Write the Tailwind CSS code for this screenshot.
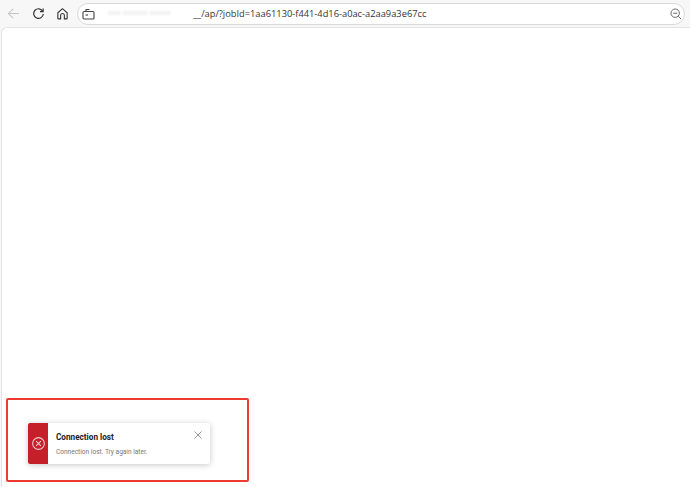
<!DOCTYPE html>
<html lang="en">
<head>
    <meta charset="UTF-8">
    <title>Connection lost</title>
    <script src="https://cdn.jsdelivr.net/npm/@tailwindcss/browser@4"></script>
</head>
<body class="w-[690px] h-[487px] overflow-hidden bg-[#f7f7f7] font-['Open_Sans',sans-serif]">
    <!-- Browser toolbar -->
    <header class="h-[27px] flex items-center pl-[7px] pr-[5px]">
        <svg class="w-[13px] h-[13px] text-[#c4c4c4]" viewBox="0 0 14 14" fill="none" stroke="currentColor" stroke-width="1.1"><path d="M13 7H1.5M6.5 2 1.5 7l5 5"/></svg>
        <svg class="w-[13px] h-[13px] ml-[12px] text-[#333]" viewBox="0 0 14 14" fill="none" stroke="currentColor" stroke-width="1.3"><path d="M11.6 4.6A5.2 5.2 0 1 0 12.2 7.6"/><path d="M12 1.6v3.4H8.6"/></svg>
        <svg class="w-[13px] h-[13px] ml-[11px] text-[#333]" viewBox="0 0 14 14" fill="none" stroke="currentColor" stroke-width="1.2"><path d="M2 6.2 7 1.8l5 4.4V12a.8.8 0 0 1-.8.8H9V9a2 2 0 0 0-4 0v3.8H2.8A.8.8 0 0 1 2 12z"/></svg>
        <!-- Address bar -->
        <div class="ml-[8px] flex-1 h-[22px] bg-white border border-[#d9d9d9] rounded-full flex items-center pl-[4px] pr-[2px]">
            <svg class="w-[13px] h-[12px] text-[#444]" viewBox="0 0 13 12" fill="none" stroke="currentColor" stroke-width="1.1"><rect x="1" y="3.5" width="11" height="7.5" rx="1"/><path d="M4 3.5V1.5h3.5"/><path d="M3.5 7h2.5"/></svg>
            <span class="ml-[13px] w-[68px] text-[7px] text-[#dcdcdc] blur-[0.8px] whitespace-nowrap overflow-hidden">ooo oooooo ooooo</span>
            <span class="ml-[17px] text-[9.3px] leading-none text-[#333]">__/ap/?jobId=1aa61130-f441-4d16-a0ac-a2aa9a3e67cc</span>
            <svg class="ml-auto w-[12px] h-[12px] text-[#666]" viewBox="0 0 12 12" fill="none" stroke="currentColor" stroke-width="1"><circle cx="5.2" cy="5.2" r="4.2"/><path d="M3.2 5.2h4M8.3 8.3 11 11"/></svg>
        </div>
    </header>

    <!-- Page -->
    <main class="h-[460px] ml-[1px] bg-white rounded-tl-md border-l border-t border-[#e4e4e4] flex flex-col justify-end pl-[4px] pb-[5px]">
        <div class="w-[243px] h-[84px] border-2 border-[#ef3a32] rounded-[2px] flex items-center pl-[20px] pt-[6px]">
            <!-- Toast -->
            <div class="w-[182px] h-[41px] flex bg-white rounded-[2px] shadow-[0_1px_6px_rgba(0,0,0,0.22)] overflow-hidden font-['Roboto',sans-serif]">
                <div class="w-[20px] bg-[#c5202a] flex items-center justify-center">
                    <svg class="w-[13px] h-[13px] text-[#f3c9cc]" viewBox="0 0 12 12" fill="none" stroke="currentColor" stroke-width="1"><circle cx="6" cy="6" r="5.4"/><path d="M3.8 3.8l4.4 4.4M8.2 3.8l-4.4 4.4"/></svg>
                </div>
                <div class="flex-1 pl-[8px] pt-[9px]">
                    <p class="text-[8.2px] leading-[11px] font-bold text-[#222]">Connection lost</p>
                    <p class="mt-[5px] text-[6.55px] leading-[9px] text-[#777]">Connection lost. Try again later.</p>
                </div>
                <svg class="mt-[8px] mr-[8px] w-[8px] h-[8px] text-[#999]" viewBox="0 0 8 8" fill="none" stroke="currentColor" stroke-width="1"><path d="M.5.5l7 7M7.5.5l-7 7"/></svg>
            </div>
        </div>
    </main>
</body>
</html>
